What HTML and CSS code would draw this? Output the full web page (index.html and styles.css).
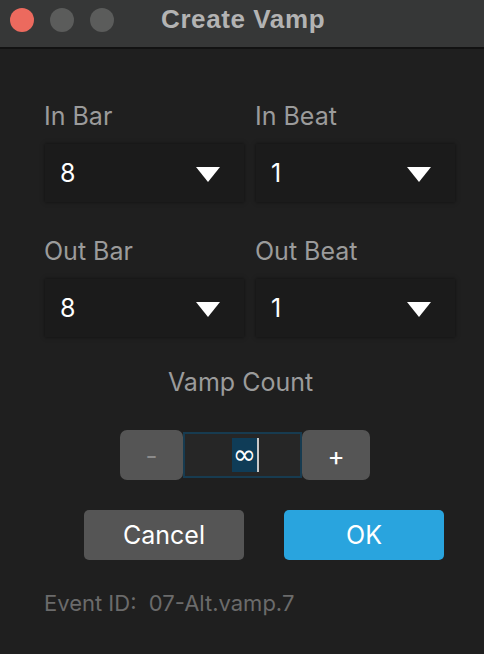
FILE: index.html
```html
<!DOCTYPE html>
<html>
<head>
<meta charset="utf-8">
<link rel="stylesheet" href="styles.css">
</head>
<body>
<div class="window">
  <div class="titlebar">
    <div class="lights">
      <span class="light red"></span>
      <span class="light gray"></span>
      <span class="light gray"></span>
    </div>
    <div class="title">Create Vamp</div>
  </div>
  <div class="content">
    <div class="grid">
      <div class="field">
        <div class="label">In Bar</div>
        <div class="select"><span class="value">8</span><span class="tri"></span></div>
      </div>
      <div class="field">
        <div class="label">In Beat</div>
        <div class="select"><span class="value">1</span><span class="tri"></span></div>
      </div>
      <div class="field">
        <div class="label">Out Bar</div>
        <div class="select"><span class="value">8</span><span class="tri"></span></div>
      </div>
      <div class="field">
        <div class="label">Out Beat</div>
        <div class="select"><span class="value">1</span><span class="tri"></span></div>
      </div>
    </div>
    <div class="count-label">Vamp Count</div>
    <div class="stepper">
      <div class="step minus">-</div>
      <div class="input"><span class="sel">∞</span><span class="caret"></span></div>
      <div class="step plus">+</div>
    </div>
    <div class="actions">
      <div class="btn cancel">Cancel</div>
      <div class="btn ok">OK</div>
    </div>
    <div class="event">Event ID:&nbsp; 07-Alt.vamp.7</div>
  </div>
</div>
</body>
</html>
```
FILE: styles.css
```css
html, body {
  margin: 0;
  padding: 0;
  background: #1f1f1f;
}
.window {
  width: 484px;
  height: 654px;
  background: #1f1f1f;
  font-family: Inter, "Noto Sans", sans-serif;
  overflow: hidden;
}
.titlebar {
  height: 47px;
  background: #363737;
  border-bottom: 2px solid #121212;
  display: flex;
  align-items: center;
}
.lights {
  display: flex;
  gap: 16px;
  padding-left: 10px;
  margin-top: -7px;
}
.light {
  width: 24px;
  height: 24px;
  border-radius: 50%;
  display: block;
}
.red { background: #ec6a5e; }
.gray { background: #5b5c5b; }
.title {
  margin-left: 47px;
  margin-top: -8px;
  font-family: "Liberation Sans", Arial, sans-serif;
  font-weight: bold;
  font-size: 26px;
  letter-spacing: 0.6px;
  color: #b3b3b3;
}
.content {
  padding: 0 30px 0 45px;
}
.grid {
  display: grid;
  grid-template-columns: 199px 199px;
  column-gap: 12px;
  row-gap: 34px;
  padding-top: 52px;
}
.label {
  font-size: 25px;
  color: #9b9b9b;
  line-height: 30px;
  margin-left: -1px;
  margin-bottom: 13px;
}
.select {
  height: 58px;
  background: #1b1b1b;
  box-shadow: 0 0 4px rgba(0,0,0,0.55);
  display: flex;
  align-items: center;
  justify-content: space-between;
  padding: 0 24px 0 15px;
}
.value {
  font-size: 25px;
  color: #ffffff;
}
.tri {
  width: 0;
  height: 0;
  border-left: 12px solid transparent;
  border-right: 12px solid transparent;
  border-top: 15px solid #ffffff;
  margin-top: 2px;
}
.count-label {
  text-align: center;
  font-size: 25px;
  color: #9b9b9b;
  line-height: 30px;
  margin-top: 30px;
  margin-left: -18px;
}
.stepper {
  display: flex;
  justify-content: center;
  align-items: center;
  margin-top: 33px;
  margin-left: -9px;
}
.step {
  width: 63px;
  height: 50px;
  background: #555555;
  border-radius: 7px;
  display: flex;
  align-items: center;
  justify-content: center;
  font-size: 26px;
}
.minus { color: #8c8c8c; }
.plus { color: #ffffff; width: 68px; }
.input {
  box-sizing: border-box;
  width: 119px;
  height: 46px;
  border: 2px solid #173b50;
  background: #262626;
  display: flex;
  align-items: center;
  justify-content: center;
  padding-left: 6px;
}
.sel {
  background: #0f3c57;
  color: #ffffff;
  font-size: 28px;
  line-height: 34px;
  height: 34px;
  padding: 0 1px;
  font-family: "DejaVu Sans", sans-serif;
}
.caret {
  width: 2px;
  height: 34px;
  background: #c8c8c8;
}
.actions {
  display: flex;
  gap: 40px;
  margin-top: 30px;
  padding-left: 39px;
}
.btn {
  width: 160px;
  height: 50px;
  border-radius: 5px;
  display: flex;
  align-items: center;
  justify-content: center;
  font-size: 25px;
  color: #ffffff;
}
.cancel { background: #555555; }
.ok { background: #29a4de; }
.event {
  margin-top: 30px;
  font-size: 22px;
  color: #6b6b6b;
  margin-left: -1px;
}
```
